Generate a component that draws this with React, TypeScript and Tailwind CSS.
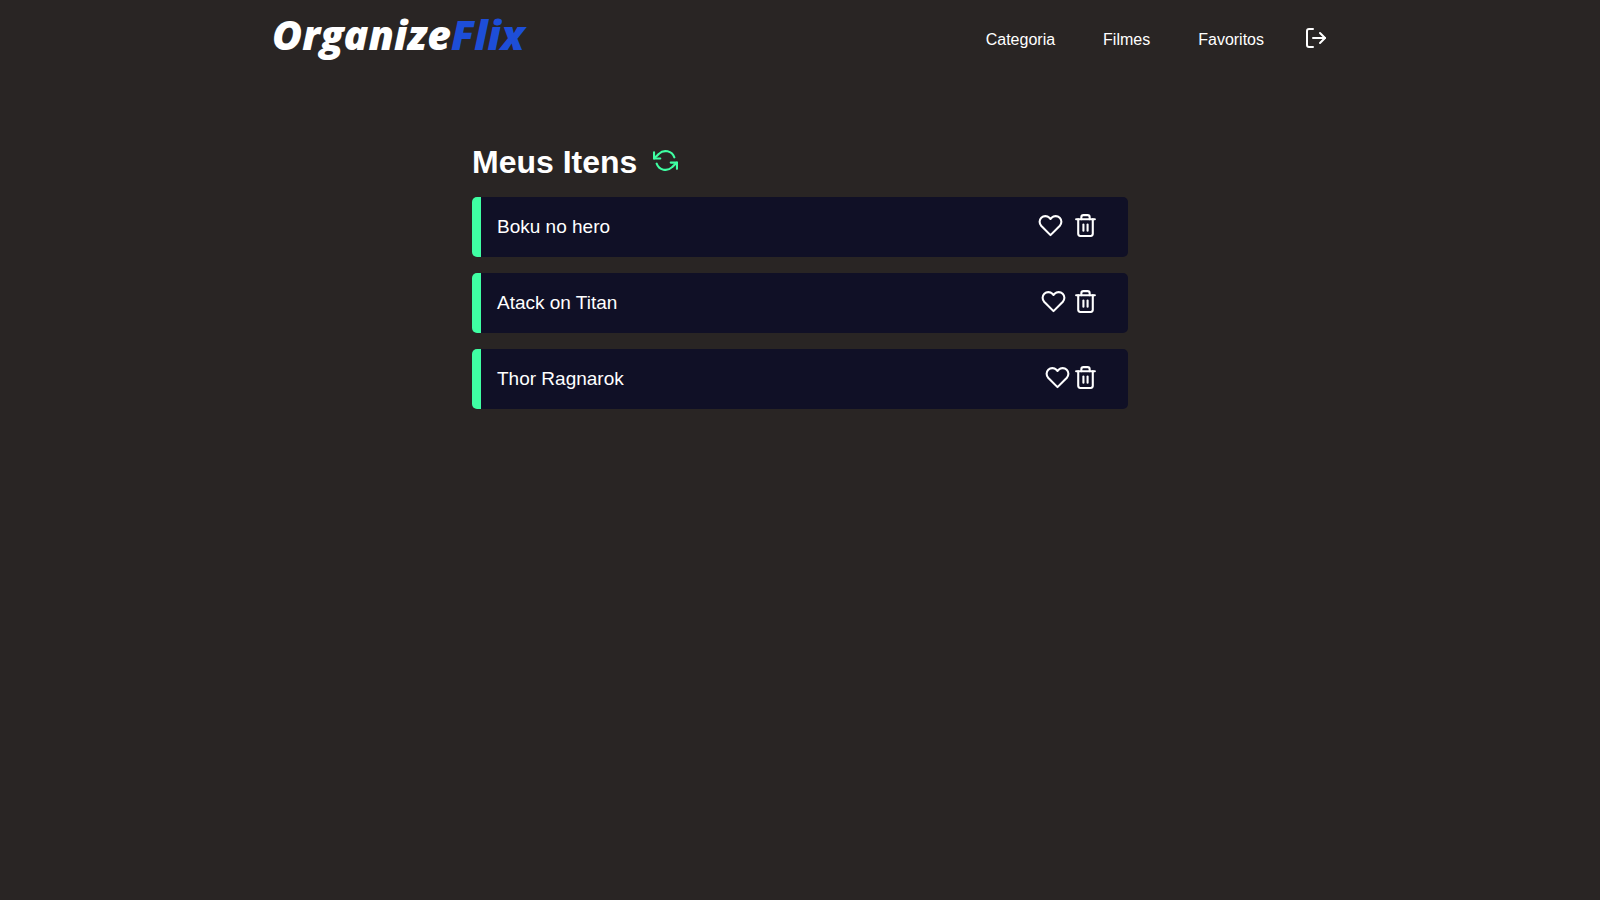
import { FiHeart, FiLogOut, FiRefreshCcw, FiTrash2 } from "react-icons/fi";

const items = [
  { title: "Boku no hero", gap: "gap-[10px]" },
  { title: "Atack on Titan", gap: "gap-[7px]" },
  { title: "Thor Ragnarok", gap: "gap-[3px]" },
];

export default function App() {
  return (
    <div className="min-h-screen bg-[#292524] font-['Liberation_Sans',Arial,sans-serif] text-white">
      <header className="mx-auto flex w-full max-w-[1056px] items-center justify-between pt-[10px] pb-[18px]">
        <a href="#" className="font-['Open_Sans',sans-serif] text-[41px] leading-[48px] font-extrabold italic">
          Organize<span className="text-[#1d4ed8]">Flix</span>
        </a>
        <nav className="flex items-center gap-12 pt-3">
          <a href="#categoria">Categoria</a>
          <a href="#filmes">Filmes</a>
          <a href="#favoritos">Favoritos</a>
          <button aria-label="Sair" className="-ml-2 pb-1"><FiLogOut size={24} /></button>
        </nav>
      </header>
      <main className="mx-auto w-full max-w-[656px] pt-16">
        <div className="flex items-center gap-4">
          <h1 className="text-[32px] leading-[44px] font-bold">Meus Itens</h1>
          <button aria-label="Atualizar" className="pb-1 text-[#3fffa3]"><FiRefreshCcw size={25} /></button>
        </div>
        <ul className="mt-[13px] flex flex-col gap-4">
          {items.map((item) => (
            <li key={item.title} className="flex h-[60px] items-center justify-between rounded-[5px] border-l-[9px] border-[#3fffa3] bg-[#101026] pr-[30px] pl-4">
              <span className="text-[19px]">{item.title}</span>
              <div className={`flex items-center pb-[3px] ${item.gap}`}>
                <button aria-label="Favoritar"><FiHeart size={25} /></button>
                <button aria-label="Excluir"><FiTrash2 size={25} /></button>
              </div>
            </li>
          ))}
        </ul>
      </main>
    </div>
  );
}
